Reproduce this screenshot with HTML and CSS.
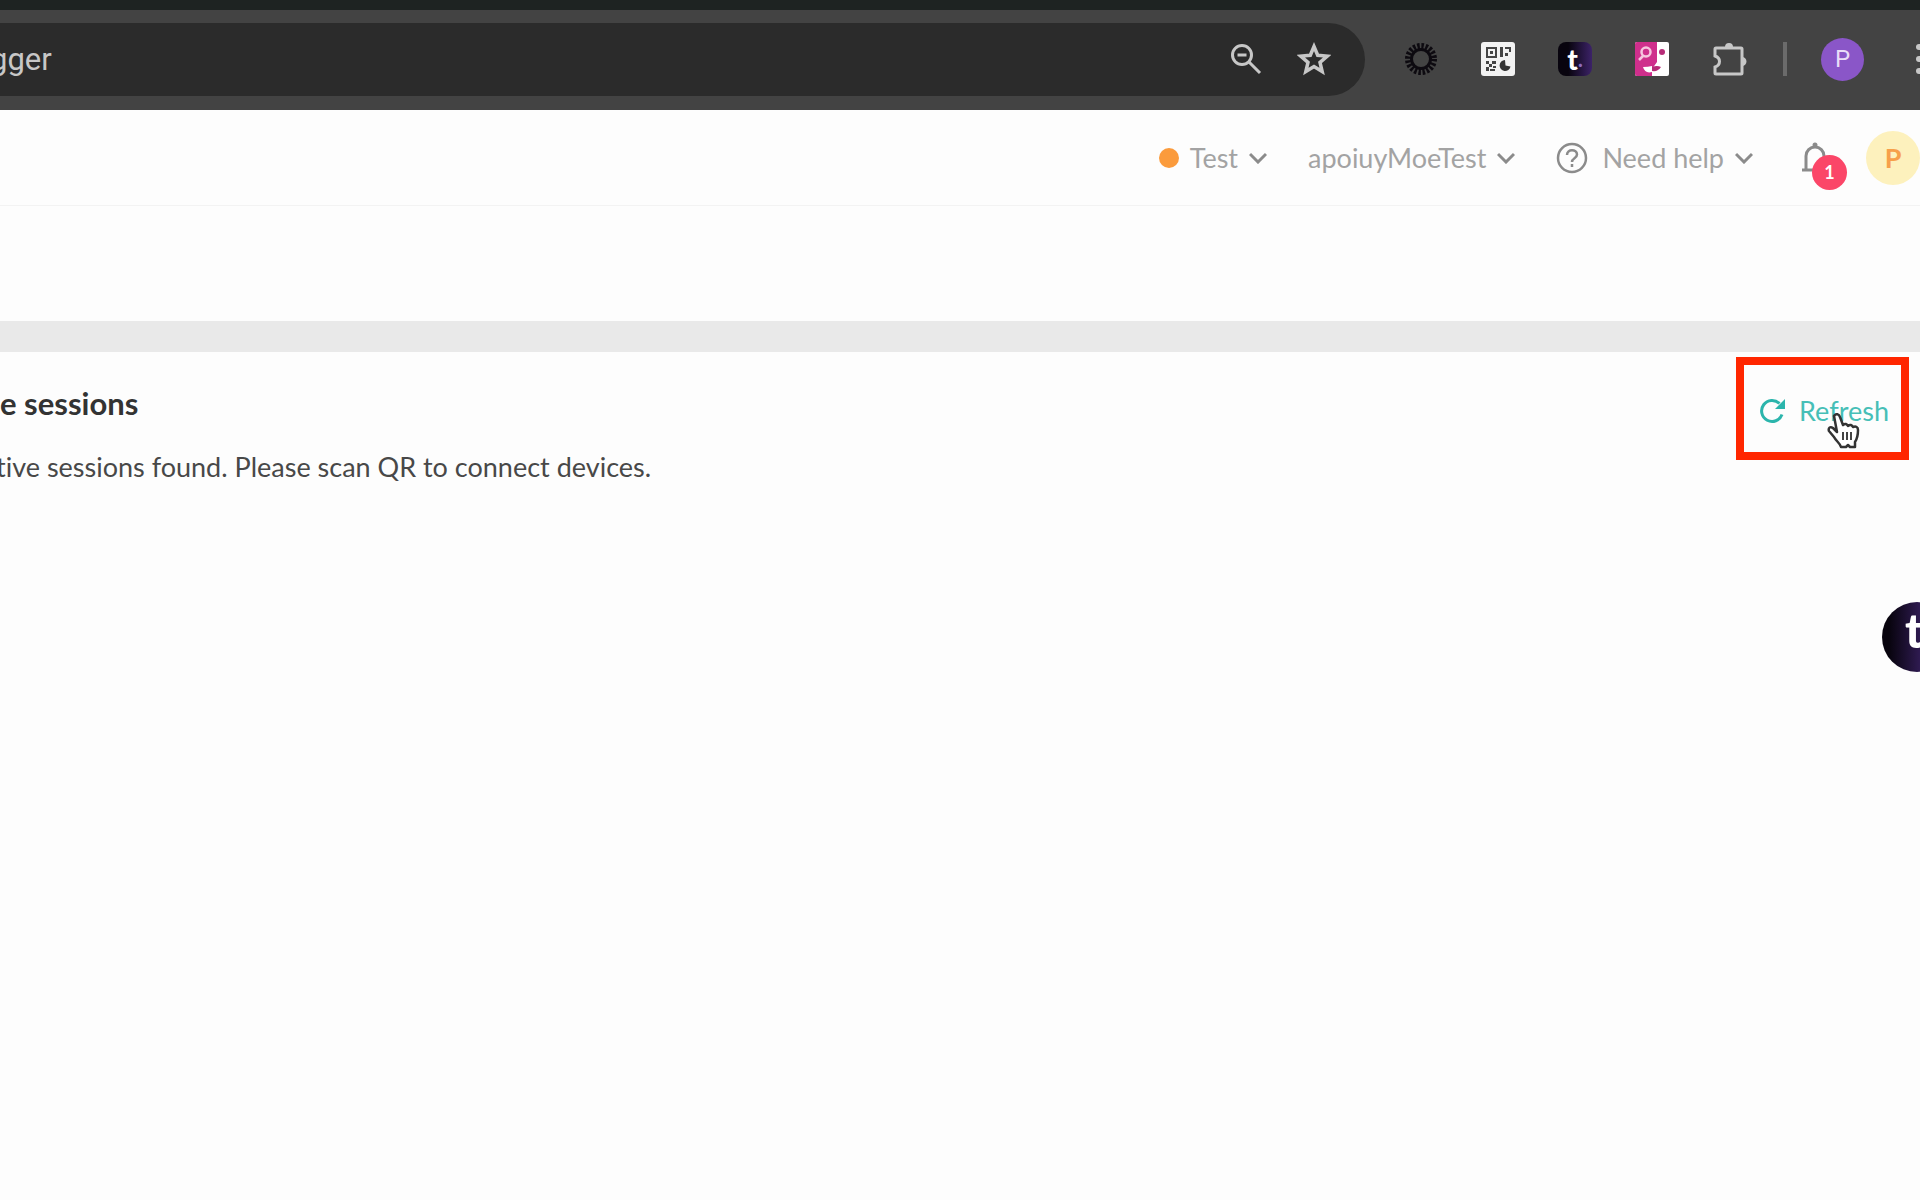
FILE: index.html
```html
<!DOCTYPE html>
<html lang="en">
<head>
    <meta charset="UTF-8">
    <meta name="viewport" content="width=device-width, initial-scale=1.0">
    <title>Active sessions</title>
    <link rel="stylesheet" href="styles.css">
</head>
<body>
    <div class="toolbar">
        <div class="omnibox">
            <span class="url">gger</span>
            <button class="icon-button" aria-label="Zoom">
                <svg width="34" height="34" viewBox="0 0 34 34" fill="none" stroke="#c7c7c7" stroke-width="3">
                    <circle cx="13" cy="13" r="9.5"/>
                    <path d="M20 20l11 11M8.5 13h9"/>
                </svg>
            </button>
            <button class="icon-button" aria-label="Bookmark">
                <svg width="34" height="34" viewBox="0 0 34 34" fill="none" stroke="#c7c7c7" stroke-width="3.5">
                    <path d="M17 4.500l3.700 8.800 9.500.800-7.200 6.200 2.200 9.300L17 24.600l-8.200 5 2.200-9.300-7.200-6.200 9.500-.800z"/>
                </svg>
            </button>
        </div>
        <div class="extensions">
            <button class="icon-button" aria-label="Sunburst">
                <svg width="34" height="34" viewBox="0 0 34 34" fill="none">
                    <circle cx="17" cy="17" r="9.500" stroke="#0d0a10" stroke-width="3"/>
                    <circle cx="17" cy="17" r="13" stroke="#0d0a10" stroke-width="6" stroke-dasharray="2.400 1.684"/>
                </svg>
            </button>
            <button class="icon-button" aria-label="QR code">
                <svg width="34" height="34" viewBox="0 0 34 34">
                    <rect width="34" height="34" rx="3" fill="#f2f2f2"/>
                    <path d="M6 6h9v9H6z" fill="none" stroke="#444" stroke-width="2"/>
                    <path d="M9 9h3v3H9zM19 5h3v10h-3zM24 5h6v5h-2V7h-4zM24 11h3v3h-3zM5 19h3v3H5zM8 22h3v3H8zM11 19h4v3h-4zM5 25h3v4H5zM9 27h5v2H9zM12 24h3v2h-3z" fill="#444"/>
                    <path d="M24 18a5.500 5.500 0 1 0 5.500 6.500l-5-1z" fill="#333"/>
                </svg>
            </button>
            <button class="icon-button app-icon" aria-label="App">t<span class="app-dot">.</span></button>
            <button class="icon-button" aria-label="Inspector">
                <svg width="34" height="34" viewBox="0 0 34 34">
                    <rect width="34" height="34" rx="2" fill="#fff"/>
                    <path d="M2 0h20v20l-5 7v7H2a2 2 0 0 1-2-2V2a2 2 0 0 1 2-2z" fill="#cf2f8c"/>
                    <circle cx="11" cy="10" r="4.500" fill="none" stroke="#f6c5df" stroke-width="2.500"/>
                    <path d="M8 14l-4 4" stroke="#f6c5df" stroke-width="2.500"/>
                    <circle cx="27" cy="10" r="3" fill="#b72c78"/>
                    <path d="M8 25q5 0 9-1v6q-7 2-9-5z" fill="#fff"/>
                    <path d="M17 25q5-2 9 0-3 5-9 4z" fill="#b72c78"/>
                </svg>
            </button>
            <button class="icon-button" aria-label="Extensions">
                <svg width="36" height="36" viewBox="0 0 36 36">
                    <path d="M5 7h25a1 1 0 0 1 1 1v24a1 1 0 0 1-1 1H5a1 1 0 0 1-1-1v-6c6-2 6-9 0-11V8a1 1 0 0 1 1-1z" fill="none" stroke="#c7c7c7" stroke-width="3"/>
                    <path d="M14 6a4 4 0 0 1 8 0zM31 16a4 4 0 0 1 0 9z" fill="#c7c7c7"/>
                </svg>
            </button>
        </div>
        <div class="profile">
            <span class="divider"></span>
            <button class="profile-avatar">P</button>
        </div>
        <button class="menu-button" aria-label="Menu">
            <svg width="8" height="36" viewBox="0 0 8 36" fill="#c7c7c7">
                <circle cx="4" cy="6" r="3"/>
                <circle cx="4" cy="18" r="3"/>
                <circle cx="4" cy="30" r="3"/>
            </svg>
        </button>
    </div>

    <header class="header">
        <button class="dropdown">
            <span class="status-dot"></span>
            Test
            <svg class="chevron" width="18" height="12" viewBox="0 0 18 12"><path d="M1 2l8 8 8-8"/></svg>
        </button>
        <button class="dropdown">
            apoiuyMoeTest
            <svg class="chevron" width="18" height="12" viewBox="0 0 18 12"><path d="M1 2l8 8 8-8"/></svg>
        </button>
        <button class="dropdown help">
            <svg width="32" height="32" viewBox="0 0 32 32" fill="none" stroke="#8b8b8b" stroke-width="2.500">
                <circle cx="16" cy="16" r="14"/>
                <path d="M11 13c0-6.500 10-6 10-.500 0 4-5 3.500-5 7.500"/>
                <path d="M16 22v3"/>
            </svg>
            Need help
            <svg class="chevron" width="18" height="12" viewBox="0 0 18 12"><path d="M1 2l8 8 8-8"/></svg>
        </button>
        <button class="bell" aria-label="Notifications">
            <svg width="30" height="32" viewBox="0 0 30 32" fill="none" stroke="#8b8b8b" stroke-width="3">
                <path d="M2 28h26M6 28V14a9 9 0 0 1 18 0v14"/>
                <circle cx="15" cy="3" r="2.500" fill="#8b8b8b" stroke="none"/>
            </svg>
            <span class="badge">1</span>
        </button>
        <button class="user-avatar">P</button>
    </header>

    <div class="page-title"></div>

    <main class="sessions">
        <div class="sessions-text">
            <h1>e sessions</h1>
            <p>tive sessions found. Please scan QR to connect devices.</p>
        </div>
        <div class="highlight">
            <button class="refresh">
                <svg width="26" height="26" viewBox="0 0 26 26">
                    <path d="M23 16.500A10.500 10.500 0 1 1 20.500 5.500" fill="none" stroke="#2bb5ac" stroke-width="3"/>
                    <path d="M26 1v10H16z" fill="#2bb5ac"/>
                </svg>
                Refresh
            </button>
            <svg class="cursor" width="34" height="36" viewBox="0 0 34 36">
                <path d="M7 3c2-3 5-2 6 1l3 8c2-2 4-1 5 1 2-2 4-1 5 1 3-1 5 0 5 3 0 6-1 9-3 12v5h-5l-2-2-2 2h-5c-1-4-5-6-7-10l-5-6c-1-3 1-5 4-3l4 4z" fill="#fff" stroke="#333" stroke-width="2.500" stroke-linejoin="round"/>
                <path d="M16 19v8M20 19v8M24 19v8" stroke="#444" stroke-width="2"/>
            </svg>
        </div>
    </main>

    <button class="floating-button">t</button>
</body>
</html>
```
FILE: styles.css
```css
* {
    box-sizing: border-box;
}

body {
    margin: 0;
    min-height: 100vh;
    overflow-x: hidden;
    background-color: #fdfdfd;
    color: #484848;
    font-family: Lato, "Open Sans", sans-serif;
    font-size: 27px;
    font-variant-ligatures: none;
}

button {
    display: flex;
    align-items: center;
    padding: 0;
    border: 0;
    background: none;
    color: inherit;
    font: inherit;
    cursor: pointer;
}

svg {
    display: block;
    flex: none;
}

/* Browser toolbar */
.toolbar {
    display: flex;
    align-items: center;
    height: 110px;
    padding-bottom: 2px;
    border-top: 10px solid #1e2322;
    background-color: #434343;
    overflow: hidden;
}

.omnibox {
    flex: 1;
    display: flex;
    align-items: center;
    gap: 34px;
    height: 73px;
    padding-right: 34px;
    border-radius: 0 37px 37px 0;
    background-color: #2b2b2b;
}

.url {
    flex: 1;
    margin-left: -10px;
    color: #c7c7c7;
    font-family: Roboto, sans-serif;
    font-size: 31px;
}

.icon-button {
    justify-content: center;
    width: 34px;
    height: 34px;
}

.extensions {
    display: flex;
    gap: 43px;
    margin-left: 39px;
}

.app-icon {
    border-radius: 8px;
    background: linear-gradient(90deg, #08040e 30%, #3c2268);
    color: #fff;
    font-size: 28px;
    font-weight: 900;
    line-height: 30px;
}

.app-dot {
    color: #8d6bc0;
    font-size: 20px;
}

.profile {
    display: flex;
    align-items: center;
    gap: 34px;
    margin-left: 37px;
}

.divider {
    width: 4px;
    height: 34px;
    background-color: #6b6b6b;
}

.profile-avatar {
    justify-content: center;
    width: 43px;
    height: 43px;
    border-radius: 50%;
    background-color: #8a56c8;
    color: #e9dcf8;
    font-family: Roboto, sans-serif;
    font-size: 24px;
}

.menu-button {
    width: 5px;
    margin-left: 51px;
}

/* App header */
.header {
    display: flex;
    align-items: center;
    justify-content: flex-end;
    gap: 41px;
    height: 96px;
    border-bottom: 1px solid #f3f3f3;
    color: #a3a3a3;
}

.dropdown {
    gap: 11px;
}

.help {
    gap: 14px;
}

.help .chevron {
    margin-left: -3px;
}

.status-dot {
    width: 20px;
    height: 20px;
    border-radius: 50%;
    background-color: #fb9b3c;
}

.chevron {
    fill: none;
    stroke: #8b8b8b;
    stroke-width: 3;
}

.bell {
    position: relative;
    margin: 0 -5px 0 6px;
}

.badge {
    position: absolute;
    top: 13px;
    left: 12px;
    width: 35px;
    height: 35px;
    border-radius: 50%;
    background-color: #fb4668;
    color: #fff;
    font-size: 18px;
    font-weight: 700;
    line-height: 35px;
    text-align: center;
}

.user-avatar {
    justify-content: center;
    width: 54px;
    height: 54px;
    border-radius: 50%;
    background-color: #fdf1bd;
    color: #f7a04a;
    font-weight: 700;
}

.page-title {
    height: 146px;
    border-bottom: 31px solid #e9e9e9;
}

/* Sessions */
.sessions {
    display: flex;
    align-items: flex-start;
    justify-content: space-between;
    padding: 5px 11px 0 0;
}

.sessions-text {
    padding-top: 30px;
}

.sessions-text h1 {
    margin: 0 0 32px;
    color: #333;
    font-size: 31px;
    line-height: 32px;
}

.sessions-text p {
    margin: 0 0 0 -4px;
    line-height: 32px;
}

.highlight {
    position: relative;
    padding: 30px 12px 25px 15px;
    border: 8px solid #ff2600;
}

.refresh {
    gap: 14px;
    color: #46bfb7;
    line-height: 32px;
}

.cursor {
    position: absolute;
    top: 48px;
    left: 83px;
}

.floating-button {
    position: fixed;
    top: 602px;
    right: -32px;
    width: 70px;
    height: 70px;
    padding: 0 0 14px 23px;
    border-radius: 50%;
    background: linear-gradient(90deg, #08040e 10%, #3c2268 70%);
    color: #fff;
    font-size: 48px;
    font-weight: 900;
    line-height: 56px;
}
```
